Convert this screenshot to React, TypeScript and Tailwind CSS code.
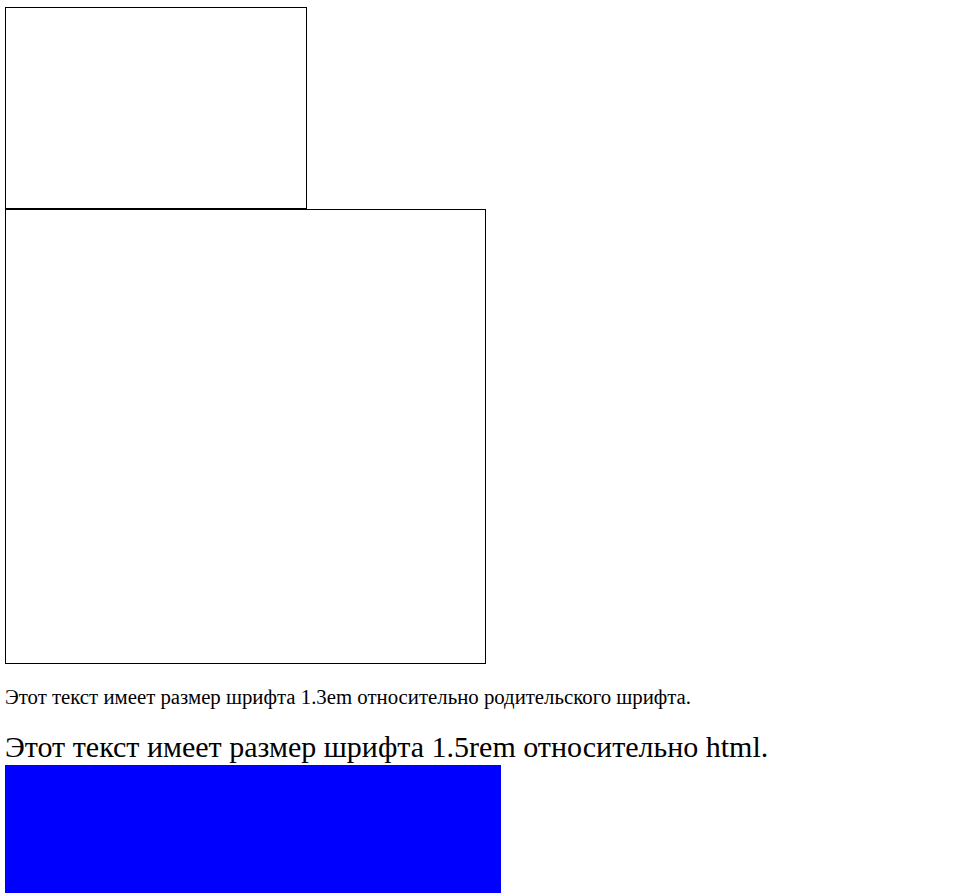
export default function App() {
  return (
    <div className="min-h-screen bg-white pl-[5px] pt-[7px] [font-family:'Liberation_Serif',serif] text-black">
      <div className="h-[202px] w-[302px] border border-black" />
      <div className="h-[455px] w-[481px] border border-black" />
      <p className="mt-[20.8px] text-[20.8px] leading-[normal]">
        Этот текст имеет размер шрифта 1.3em относительно родительского шрифта.
      </p>
      <p className="mt-[20.8px] text-[30px] leading-[normal]">
        Этот текст имеет размер шрифта 1.5rem относительно html.
      </p>
      <div className="mt-px h-[200px] w-[496px] bg-[#0000ff]" />
    </div>
  );
}
